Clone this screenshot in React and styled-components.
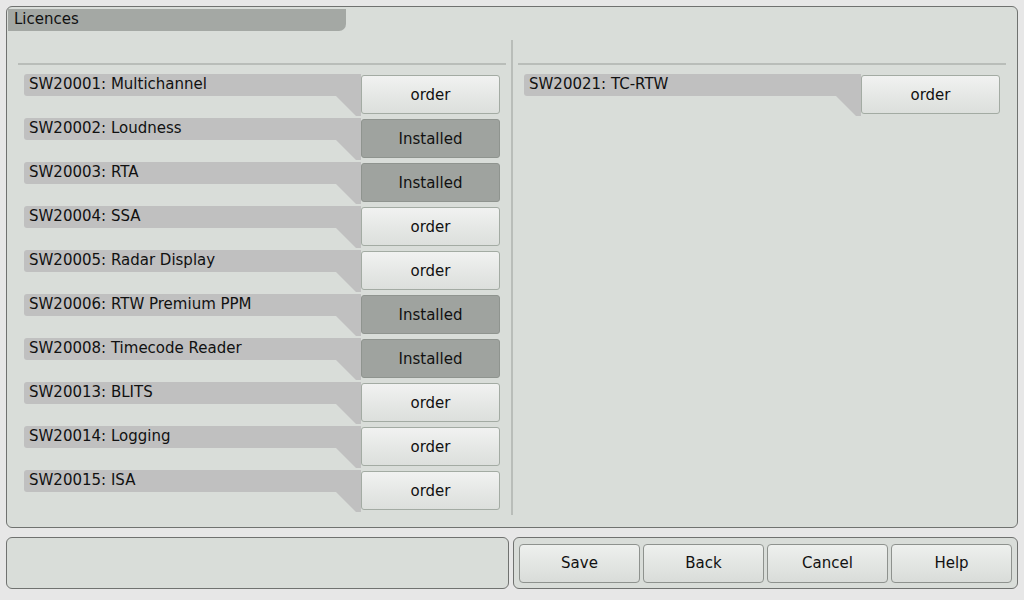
import React from "react";
import styled, { createGlobalStyle } from "styled-components";

const GlobalStyle = createGlobalStyle`
  html, body {
    margin: 0;
    padding: 0;
    background: #e7e7e7;
    font-family: "DejaVu Sans", sans-serif;
    color: #111;
  }
`;

const left = [
  { id: "SW20001", name: "Multichannel", installed: false },
  { id: "SW20002", name: "Loudness", installed: true },
  { id: "SW20003", name: "RTA", installed: true },
  { id: "SW20004", name: "SSA", installed: false },
  { id: "SW20005", name: "Radar Display", installed: false },
  { id: "SW20006", name: "RTW Premium PPM", installed: true },
  { id: "SW20008", name: "Timecode Reader", installed: true },
  { id: "SW20013", name: "BLITS", installed: false },
  { id: "SW20014", name: "Logging", installed: false },
  { id: "SW20015", name: "ISA", installed: false },
];

const right = [{ id: "SW20021", name: "TC-RTW", installed: false }];

const App = () => {
  const renderRows = (items) =>
    items.map(({ id, name, installed }) => (
      <Row key={id}>
        <Label>
          {id}: {name}
        </Label>
        <OrderButton installed={installed}>
          {installed ? "Installed" : "order"}
        </OrderButton>
      </Row>
    ));

  return (
    <Page>
      <GlobalStyle />
      <Panel>
        <TitleTab>Licences</TitleTab>
        <Columns>
          <Column>
            <Rule />
            {renderRows(left)}
          </Column>
          <Divider />
          <Column>
            <Rule />
            {renderRows(right)}
          </Column>
        </Columns>
      </Panel>
      <Footer>
        <Box />
        <Box>
          <FooterButton>Save</FooterButton>
          <FooterButton>Back</FooterButton>
          <FooterButton>Cancel</FooterButton>
          <FooterButton>Help</FooterButton>
        </Box>
      </Footer>
    </Page>
  );
};

const Page = styled.div`
  width: 1024px;
  height: 600px;
  padding: 6px;
  box-sizing: border-box;
  display: flex;
  flex-direction: column;
`;

const Panel = styled.div`
  height: 522px;
  box-sizing: border-box;
  border: 1px solid #707270;
  border-radius: 6px;
  background: #d9ddd9;
  display: flex;
  flex-direction: column;
`;

const TitleTab = styled.div`
  margin: 2px 0 0 1px;
  width: 338px;
  height: 22px;
  box-sizing: border-box;
  padding-left: 6px;
  background: #a4a8a4;
  border-radius: 0 0 7px 0;
  font-size: 15px;
  line-height: 21px;
`;

const Columns = styled.div`
  display: flex;
  margin: 9px 0 0 11px;
  height: 475px;
`;

const Column = styled.div`
  width: 488px;
  display: flex;
  flex-direction: column;
`;

const Rule = styled.div`
  height: 2px;
  background: #b9bdb9;
  margin: 23px 0 9px;
`;

const Divider = styled.div`
  width: 2px;
  background: #b9bdb9;
  margin: 0 5px 0 5px;
`;

const Row = styled.div`
  display: flex;
  height: 44px;
  padding: 0 6px;
`;

const Label = styled.div`
  position: relative;
  flex: 1;
  height: 22px;
  box-sizing: border-box;
  padding-left: 5px;
  background: #c0c0c0;
  border-radius: 3px 0 0 3px;
  font-size: 15px;
  line-height: 21px;
  white-space: nowrap;

  &::after {
    content: "";
    position: absolute;
    right: 0;
    top: 22px;
    width: 25px;
    height: 20px;
    background: #c0c0c0;
    clip-path: polygon(0 0, 100% 0, 100% 100%, 20px 100%);
  }
`;

const OrderButton = styled.div`
  width: 139px;
  height: 39px;
  margin-top: 1px;
  box-sizing: border-box;
  border: 1px solid ${(p) => (p.installed ? "#8f948f" : "#a3aba3")};
  border-radius: 3px;
  background: ${(p) =>
    p.installed
      ? "#9fa39f"
      : "linear-gradient(#f1f2f1 0%, #e6e8e6 50%, #dcdfdc 100%)"};
  display: flex;
  align-items: center;
  justify-content: center;
  padding-top: 1px;
  font-size: 15px;
`;

const Footer = styled.div`
  display: flex;
  gap: 4px;
  margin-top: 9px;
`;

const Box = styled.div`
  width: 505px;
  height: 52px;
  box-sizing: border-box;
  border: 1px solid #707270;
  border-radius: 6px;
  background: #d9ddd9;
  display: flex;
  gap: 3px;
  padding: 6px 5px 0;
`;

const FooterButton = styled.div`
  width: 121px;
  height: 39px;
  box-sizing: border-box;
  border: 1px solid #8e928e;
  border-radius: 4px;
  background: linear-gradient(#eef0ee 0%, #e3e6e3 50%, #d9dcd9 100%);
  display: flex;
  align-items: center;
  justify-content: center;
  padding-bottom: 2px;
  font-size: 15px;
`;

export default App;
